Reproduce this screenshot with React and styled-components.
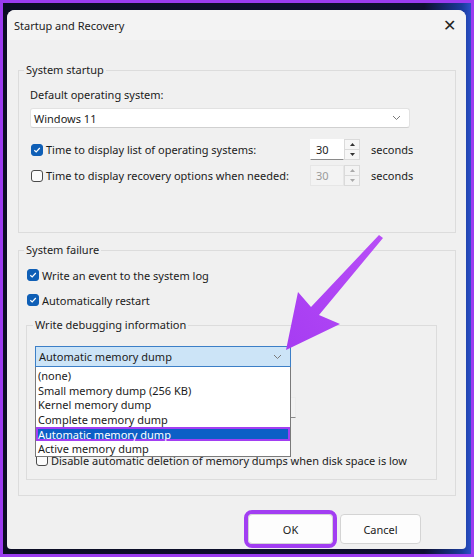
import React from "react";
import styled, { createGlobalStyle } from "styled-components";

const GlobalStyle = createGlobalStyle`
  html, body {
    margin: 0;
    padding: 0;
    background: #9b3cf0;
  }
  body {
    font-family: "Noto Sans", "Open Sans", sans-serif;
    font-size: 11px;
    color: #1b1b1b;
  }
`;

const Frame = styled.div`
  position: relative;
  width: 474px;
  height: 557px;
  box-sizing: border-box;
  padding: 3px;
  background: #9b3cf0;
`;

const Desktop = styled.div`
  height: 100%;
  box-sizing: border-box;
  padding: 7px 5px 5px 4px;
  background: linear-gradient(90deg, #0b0d24 0%, #0d1030 90%, #1a3a9a 98%, #2a50c8 100%);
`;

const Dialog = styled.div`
  display: flex;
  flex-direction: column;
  height: 100%;
  background: #f0f0f0;
  border-radius: 8px 8px 4px 4px;
  overflow: hidden;
`;

const TitleBar = styled.div`
  display: flex;
  align-items: center;
  justify-content: space-between;
  height: 30px;
  padding: 0 10px 0 7px;
  background: #f3f3f3;
  font-size: 11px;
`;

const Close = styled.span`
  font-size: 16px;
  font-weight: 300;
  line-height: 1;
  color: #222;
`;

const Body = styled.div`
  display: flex;
  flex-direction: column;
  padding: 22px 10px 0 11px;
`;

const Group = styled.fieldset`
  margin: ${(p) => p.$mt || 0}px 0 0 0;
  padding: ${(p) => p.$pad};
  border: 1px solid #dcdcdc;
  border-radius: 0;
  display: flex;
  flex-direction: column;
  min-width: 0;
`;

const Legend = styled.legend`
  padding: 0 2px;
  margin-left: ${(p) => p.$ml || 0}px;
  line-height: 16px;
  color: #222;
`;

const Label = styled.div`
  line-height: 16px;
  margin-top: ${(p) => p.$mt || 0}px;
`;

const Select = styled.div`
  display: flex;
  align-items: center;
  justify-content: space-between;
  box-sizing: border-box;
  height: ${(p) => p.$h || 20}px;
  width: ${(p) => p.$w}px;
  margin-top: ${(p) => p.$mt || 0}px;
  padding: 0 8px 0 3px;
  background: ${(p) => (p.$active ? "#cce4f7" : "#ffffff")};
  border: 1px solid ${(p) => (p.$active ? "#3c7fc7" : "#e2e2e2")};
  border-bottom-color: ${(p) => (p.$active ? "#3c7fc7" : "#d0d0d0")};
  border-radius: ${(p) => (p.$active ? 0 : 3)}px;
`;

const Chevron = () => (
  <svg width="9" height="6" viewBox="0 0 9 6">
    <path d="M1 1 L4.5 4.5 L8 1" fill="none" stroke="#7a7a7a" strokeWidth="1" />
  </svg>
);

const Row = styled.div`
  display: flex;
  align-items: center;
  height: ${(p) => p.$h || 16}px;
  margin-top: ${(p) => p.$mt || 0}px;
  white-space: nowrap;
`;

const Check = styled.span`
  display: inline-flex;
  align-items: center;
  justify-content: center;
  box-sizing: border-box;
  width: 12px;
  height: 12px;
  margin-left: 1px;
  margin-right: 3px;
  border-radius: 3px;
  background: ${(p) => (p.$on ? "#0f5fb6" : "#fbfbfb")};
  border: 1px solid ${(p) => (p.$on ? "#0f5fb6" : "#4a4a4a")};
  flex-shrink: 0;
`;

const CheckBox = ({ on }) => (
  <Check $on={on}>
    {on && (
      <svg width="8" height="8" viewBox="0 0 8 8">
        <path d="M1.3 4.2 L3.2 6 L6.8 2" fill="none" stroke="#fff" strokeWidth="1.2" />
      </svg>
    )}
  </Check>
);

const RowText = styled.span`
  width: ${(p) => p.$w || "auto"};
  flex-shrink: 0;
`;

const Spin = styled.div`
  display: flex;
  height: 21px;
`;

const SpinInput = styled.div`
  width: 34px;
  box-sizing: border-box;
  padding: 2px 0 0 5px;
  line-height: 16px;
  background: ${(p) => (p.$off ? "#f3f3f3" : "#fff")};
  color: ${(p) => (p.$off ? "#9a9a9a" : "#1b1b1b")};
  border: 1px solid ${(p) => (p.$off ? "#e6e6e6" : "#fff")};
  border-bottom: 1px solid ${(p) => (p.$off ? "#e6e6e6" : "#8a8a8a")};
`;

const SpinButtons = styled.div`
  display: flex;
  flex-direction: column;
  width: 16px;
  box-sizing: border-box;
  border: 1px solid #dadada;
  background: ${(p) => (p.$off ? "#f3f3f3" : "#f6f6f6")};
`;

const SpinHalf = styled.div`
  flex: 1;
  display: flex;
  align-items: center;
  justify-content: center;
  & + & {
    border-top: 1px solid #dadada;
  }
`;

const Tri = ({ down, off }) => (
  <svg width="5" height="3" viewBox="0 0 5 3">
    <path d={down ? "M0 0 L5 0 L2.5 3 Z" : "M0 3 L5 3 L2.5 0 Z"} fill={off ? "#a8a8a8" : "#333"} />
  </svg>
);

const SpinBox = ({ off }) => (
  <Spin>
    <SpinInput $off={off}>30</SpinInput>
    <SpinButtons $off={off}>
      <SpinHalf>
        <Tri off={off} />
      </SpinHalf>
      <SpinHalf>
        <Tri down off={off} />
      </SpinHalf>
    </SpinButtons>
  </Spin>
);

const Seconds = styled.span`
  margin-left: 11px;
`;

const DebugArea = styled.div`
  position: relative;
  display: flex;
  flex-direction: column;
`;

// the dump file edit, almost fully hidden behind the open list
const Edit = styled.div`
  box-sizing: border-box;
  width: 261px;
  height: 21px;
  margin-top: ${(p) => p.$mt || 0}px;
  background: #f2f2f2;
  border: 1px solid #ececec;
  border-bottom-color: #8a8a8a;
`;

const Spacer = styled.div`
  height: ${(p) => p.$h}px;
`;

const DropList = styled.ul`
  position: absolute;
  left: 0;
  top: 34px;
  width: 256px;
  box-sizing: border-box;
  margin: 0;
  padding: 1px 0 0;
  list-style: none;
  background: #fff;
  border: 1px solid #7a7a7a;
  border-top: none;
  z-index: 2;
`;

const Item = styled.li`
  height: 14.7px;
  line-height: 15px;
  padding-left: 2px;
  white-space: nowrap;
  background: ${(p) => (p.$sel ? "#0c5fc6" : "transparent")};
  color: ${(p) => (p.$sel ? "#fff" : "#1b1b1b")};
  box-shadow: ${(p) => (p.$sel ? "inset 0 0 0 2px #a23ef2" : "none")};
`;

const Footer = styled.div`
  display: flex;
  justify-content: flex-end;
  gap: 7px;
  margin-top: auto;
  padding: 0 45px 5px 0;
`;

const Button = styled.button`
  box-sizing: border-box;
  width: ${(p) => p.$w}px;
  height: 30px;
  font-family: inherit;
  font-size: 11px;
  color: #1b1b1b;
  background: #fdfdfd;
  border: 1px solid #d4d4d4;
  border-radius: 4px;
  outline: ${(p) => (p.$marked ? "4px solid #a23ef2" : "none")};
  outline-offset: 0;
`;

const ArrowLayer = styled.svg`
  position: absolute;
  left: 0;
  top: 0;
  pointer-events: none;
`;

const items = [
  "(none)",
  "Small memory dump (256 KB)",
  "Kernel memory dump",
  "Complete memory dump",
  "Automatic memory dump",
  "Active memory dump",
];

const App = () => {
  return (
    <>
      <GlobalStyle />
      <Frame>
        <Desktop>
          <Dialog>
            <TitleBar>
              <span>Startup and Recovery</span>
              <Close>✕</Close>
            </TitleBar>
            <Body>
              <Group $pad="0 11px 46px 11px">
                <Legend $ml={-6}>System startup</Legend>
                <Label $mt={9}>Default operating system:</Label>
                <Select $w={380} $mt={5}>
                  <span>Windows 11</span>
                  <Chevron />
                </Select>
                <Row $h={21} $mt={11}>
                  <CheckBox on />
                  <RowText $w="264px">Time to display list of operating systems:</RowText>
                  <SpinBox />
                  <Seconds>seconds</Seconds>
                </Row>
                <Row $h={21} $mt={5}>
                  <CheckBox />
                  <RowText $w="264px">Time to display recovery options when needed:</RowText>
                  <SpinBox off />
                  <Seconds>seconds</Seconds>
                </Row>
              </Group>
              <Group $mt={9} $pad="0 18px 15px 7px">
                <Legend $ml={-2}>System failure</Legend>
                <Row $mt={9}>
                  <CheckBox on />
                  <span>Write an event to the system log</span>
                </Row>
                <Row $mt={9}>
                  <CheckBox on />
                  <span>Automatically restart</span>
                </Row>
                <Group $mt={9} $pad="0 8px 11px 8px">
                  <Legend $ml={-2}>Write debugging information</Legend>
                  <DebugArea>
                    <Select $w={256} $h={21} $mt={13} $active>
                      <span>Automatic memory dump</span>
                      <Chevron />
                    </Select>
                    <Edit $mt={30} />
                    <Spacer $h={34} />
                    <Row>
                      <CheckBox />
                      <span>Disable automatic deletion of memory dumps when disk space is low</span>
                    </Row>
                    <DropList>
                      {items.map((it) => (
                        <Item key={it} $sel={it === "Automatic memory dump"}>
                          {it}
                        </Item>
                      ))}
                    </DropList>
                  </DebugArea>
                </Group>
              </Group>
            </Body>
            <Footer>
              <Button $w={85} $marked>
                OK
              </Button>
              <Button $w={81}>Cancel</Button>
            </Footer>
          </Dialog>
        </Desktop>
        <ArrowLayer width="474" height="557" viewBox="0 0 474 557">
          <defs>
            <linearGradient id="arw" x1="0" y1="1" x2="1" y2="0">
              <stop offset="0" stopColor="#a63cf2" />
              <stop offset="1" stopColor="#b84ef7" />
            </linearGradient>
          </defs>
          <path
            d="M286 350 L298 292 L311 307 L379 235 L383 238 L319 315 L340 324 Z"
            fill="url(#arw)"
          />
        </ArrowLayer>
      </Frame>
    </>
  );
};

export default App;
